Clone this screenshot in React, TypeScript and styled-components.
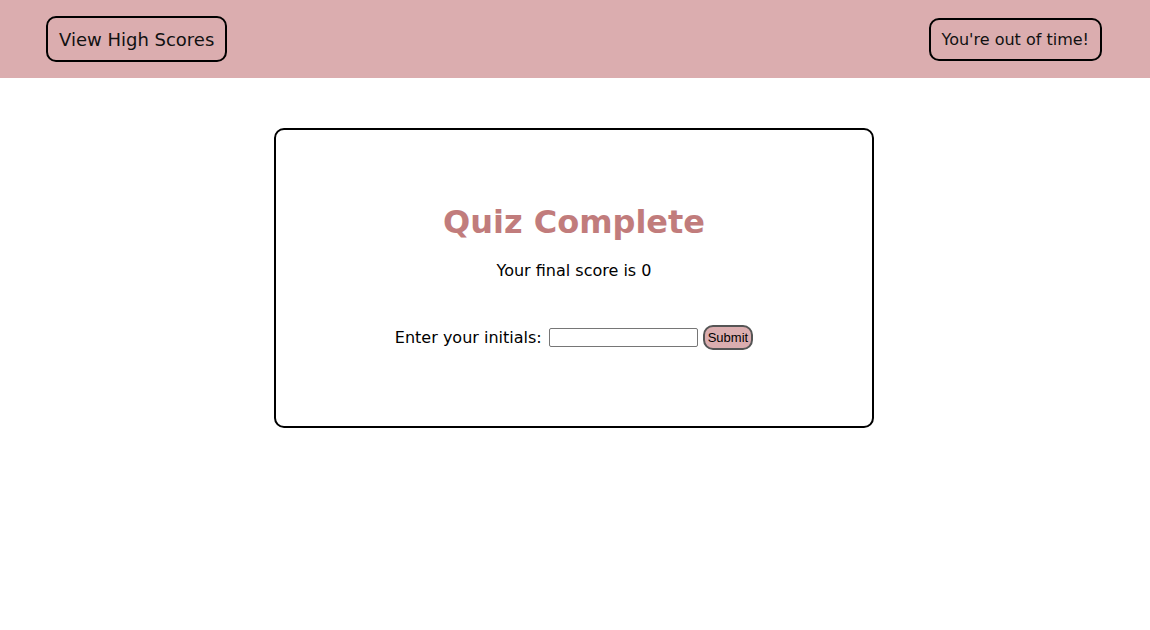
import React from "react";
import styled, { createGlobalStyle } from "styled-components";

const Global = createGlobalStyle`
  html, body { margin: 0; padding: 0; background: #ffffff; }
  body { font-family: "DejaVu Sans", Verdana, sans-serif; color: #000; }
`;

const Header = styled.header`
  height: 78px;
  box-sizing: border-box;
  background: #dbadaf;
  display: flex;
  align-items: center;
  justify-content: space-between;
  padding: 0 48px 0 46px;
`;

const HeaderButton = styled.button`
  height: 46px;
  box-sizing: border-box;
  padding: 0 11px;
  border: 2px solid #000;
  border-radius: 10px;
  background: transparent;
  font-family: "DejaVu Sans", Verdana, sans-serif;
  font-size: 18px;
  color: #111;
  cursor: pointer;
`;

const Timer = styled.div`
  height: 43px;
  box-sizing: border-box;
  padding: 0 11px;
  display: flex;
  align-items: center;
  border: 2px solid #000;
  border-radius: 10px;
  font-size: 16px;
  color: #111;
`;

const Main = styled.main`
  display: flex;
  justify-content: center;
  padding: 50px 2px 0 0;
`;

const Card = styled.section`
  width: 600px;
  height: 300px;
  box-sizing: border-box;
  border: 2px solid #000;
  border-radius: 10px;
  display: flex;
  flex-direction: column;
  align-items: center;
  justify-content: center;
  padding-bottom: 6px;
`;

const Title = styled.h1`
  margin: 0;
  font-size: 32px;
  line-height: 42px;
  font-weight: bold;
  color: #c17c7c;
`;

const Score = styled.p`
  margin: 18px 0 0;
  font-size: 16px;
  line-height: 19px;
`;

const Form = styled.form`
  margin-top: 45px;
  display: flex;
  align-items: center;
  font-size: 16px;
`;

const Label = styled.label`
  margin-right: 7px;
`;

const Input = styled.input`
  width: 149px;
  height: 19px;
  box-sizing: border-box;
  border: 1px solid #767676;
  border-radius: 2px;
  padding: 1px 2px;
  margin: 0 5px 0 0;
`;

const Submit = styled.button`
  height: 25px;
  box-sizing: border-box;
  padding: 0 3px;
  background: #dbadaf;
  border: 2px solid #555;
  border-radius: 10px;
  font-family: "Liberation Sans", Arial, sans-serif;
  font-size: 13px;
  color: #000;
`;

export default function App() {
  return (
    <>
      <Global />
      <Header>
        <HeaderButton type="button">View High Scores</HeaderButton>
        <Timer>You're out of time!</Timer>
      </Header>
      <Main>
        <Card>
          <Title>Quiz Complete</Title>
          <Score>Your final score is 0</Score>
          <Form onSubmit={(e) => e.preventDefault()}>
            <Label htmlFor="initials">Enter your initials:</Label>
            <Input id="initials" type="text" />
            <Submit type="submit">Submit</Submit>
          </Form>
        </Card>
      </Main>
    </>
  );
}
